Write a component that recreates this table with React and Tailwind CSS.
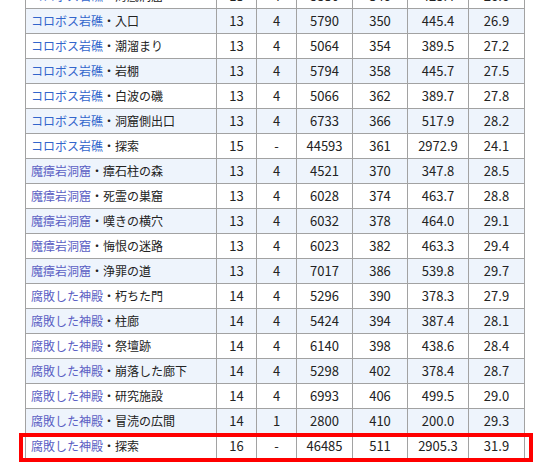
import React from "react";

const rows = [
  { area: "コロボス岩礁", spot: "海底洞窟", c: "blue", a: "13", b: "4", n: "5530", lv: "346", avg: "425.4", r: "26.6" },
  { area: "コロボス岩礁", spot: "入口", c: "blue", a: "13", b: "4", n: "5790", lv: "350", avg: "445.4", r: "26.9" },
  { area: "コロボス岩礁", spot: "潮溜まり", c: "blue", a: "13", b: "4", n: "5064", lv: "354", avg: "389.5", r: "27.2" },
  { area: "コロボス岩礁", spot: "岩棚", c: "blue", a: "13", b: "4", n: "5794", lv: "358", avg: "445.7", r: "27.5" },
  { area: "コロボス岩礁", spot: "白波の磯", c: "blue", a: "13", b: "4", n: "5066", lv: "362", avg: "389.7", r: "27.8" },
  { area: "コロボス岩礁", spot: "洞窟側出口", c: "blue", a: "13", b: "4", n: "6733", lv: "366", avg: "517.9", r: "28.2" },
  { area: "コロボス岩礁", spot: "探索", c: "blue", a: "15", b: "-", n: "44593", lv: "361", avg: "2972.9", r: "24.1" },
  { area: "魔瘴岩洞窟", spot: "瘴石柱の森", c: "violet", a: "13", b: "4", n: "4521", lv: "370", avg: "347.8", r: "28.5" },
  { area: "魔瘴岩洞窟", spot: "死霊の巣窟", c: "violet", a: "13", b: "4", n: "6028", lv: "374", avg: "463.7", r: "28.8" },
  { area: "魔瘴岩洞窟", spot: "嘆きの横穴", c: "violet", a: "13", b: "4", n: "6032", lv: "378", avg: "464.0", r: "29.1" },
  { area: "魔瘴岩洞窟", spot: "悔恨の迷路", c: "violet", a: "13", b: "4", n: "6023", lv: "382", avg: "463.3", r: "29.4" },
  { area: "魔瘴岩洞窟", spot: "浄罪の道", c: "violet", a: "13", b: "4", n: "7017", lv: "386", avg: "539.8", r: "29.7" },
  { area: "腐敗した神殿", spot: "朽ちた門", c: "violet", a: "14", b: "4", n: "5296", lv: "390", avg: "378.3", r: "27.9" },
  { area: "腐敗した神殿", spot: "柱廊", c: "violet", a: "14", b: "4", n: "5424", lv: "394", avg: "387.4", r: "28.1" },
  { area: "腐敗した神殿", spot: "祭壇跡", c: "violet", a: "14", b: "4", n: "6140", lv: "398", avg: "438.6", r: "28.4" },
  { area: "腐敗した神殿", spot: "崩落した廊下", c: "violet", a: "14", b: "4", n: "5298", lv: "402", avg: "378.4", r: "28.7" },
  { area: "腐敗した神殿", spot: "研究施設", c: "violet", a: "14", b: "4", n: "6993", lv: "406", avg: "499.5", r: "29.0" },
  { area: "腐敗した神殿", spot: "冒涜の広間", c: "violet", a: "14", b: "1", n: "2800", lv: "410", avg: "200.0", r: "29.3" },
  { area: "腐敗した神殿", spot: "探索", c: "violet", a: "16", b: "-", n: "46485", lv: "511", avg: "2905.3", r: "31.9" },
];

export default function App() {
  return (
    <div
      className="relative w-[549px] h-[474px] overflow-hidden bg-white text-[12px] text-[#222]"
      style={{ fontFamily: '"Noto Sans CJK JP", "Noto Sans", sans-serif' }}
    >
      <table className="ml-[25px] mt-[-17px] w-[500px] table-fixed border-collapse">
        <colgroup>
          <col className="w-[191px]" />
          <col className="w-[40px]" />
          <col className="w-[40px]" />
          <col className="w-[56px]" />
          <col className="w-[55px]" />
          <col className="w-[61px]" />
          <col className="w-[56px]" />
        </colgroup>
        <tbody>
          {rows.map((row, i) => (
            <tr key={i} className={i % 2 === 1 ? "bg-[#eef4fc]" : "bg-white"}>
              <td className="h-[25px] border border-[#a2a2a2] px-[5px] py-0 whitespace-nowrap">
                <span className={row.c === "blue" ? "text-[#3366cc]" : "text-[#5b5fc4]"}>{row.area}</span>
                <span>・{row.spot}</span>
              </td>
              <td className="border border-[#a2a2a2] p-0 text-center text-[13px]">{row.a}</td>
              <td className="border border-[#a2a2a2] p-0 text-center text-[13px]">{row.b}</td>
              <td className="border border-[#a2a2a2] p-0 text-center text-[13px]">{row.n}</td>
              <td className="border border-[#a2a2a2] p-0 text-center text-[13px]">{row.lv}</td>
              <td className="border border-[#a2a2a2] p-0 text-center text-[13px]">{row.avg}</td>
              <td className="border border-[#a2a2a2] p-0 text-center text-[13px]">{row.r}</td>
            </tr>
          ))}
        </tbody>
      </table>

      {/* highlight frame around the last row */}
      <div className="absolute left-[19px] top-[433px] w-[514px] h-[29px] border-[4px] border-[#ff0000]" />
    </div>
  );
}
